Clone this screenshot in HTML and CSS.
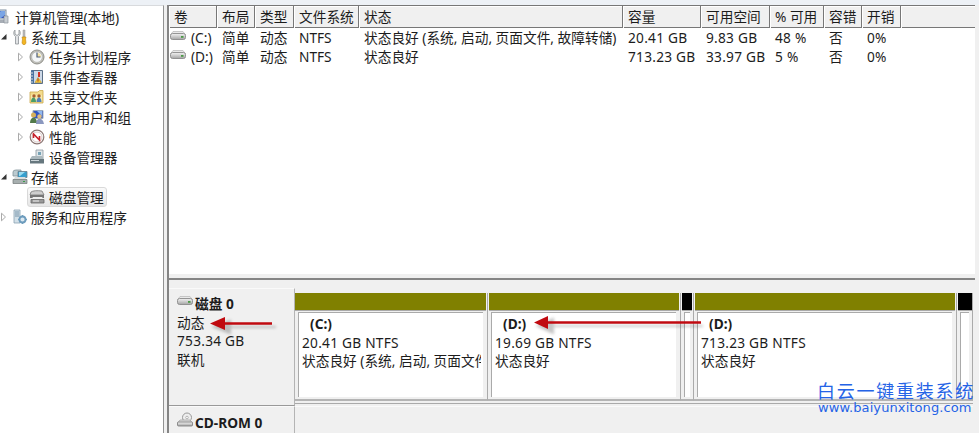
FILE: index.html
```
<!DOCTYPE html>
<html lang="zh-CN">
<head>
<meta charset="UTF-8">
<meta name="viewport" content="width=device-width, initial-scale=1.0">
<title>计算机管理</title>
<link rel="stylesheet" href="styles.css">
</head>
<body>
<!-- 公用图标 -->
<svg class="defs" width="0" height="0">
    <defs>
        <linearGradient id="metal" x1="0" y1="0" x2="0" y2="1">
            <stop offset="0" stop-color="#f4f4f4"/>
            <stop offset="1" stop-color="#a4a4a4"/>
        </linearGradient>
        <symbol id="drive" viewBox="0 0 16 10">
            <path d="M3 .5h10l2.500 3.500H.5z" fill="#e9e9e9" stroke="#bbb" stroke-width=".8"/>
            <rect x=".5" y="2.500" width="15" height="6" rx="2" fill="url(#metal)" stroke="#8a8a8a" stroke-width=".9"/>
            <rect x="11" y="5" width="2.500" height="1.800" fill="#4b9a45"/>
        </symbol>
        <symbol id="closed" viewBox="0 0 8 10">
            <path d="M1.500 1.200L5.500 5l-4 3.800z" fill="#fff" stroke="#aaa"/>
        </symbol>
        <symbol id="open" viewBox="0 0 8 10">
            <path d="M6.500 2v5.500H1z" fill="#333"/>
        </symbol>
    </defs>
</svg>

<div class="window">
    <div class="tree">
        <div class="node root">
            <svg class="icon" viewBox="0 0 16 16"><rect x="1" y="1" width="12" height="9" fill="#dde5ee" stroke="#7d8da0"/><path d="M2 2h10v7H2z" fill="#3352b8"/><path d="M2 7l6-5h4v4L8 9H2z" fill="#7aa5e5"/><path d="M4 11h8l3 3H2z" fill="#a7adb5"/><path d="M11 7h4v7h-4z" fill="#c8cdd2" stroke="#8b939c" stroke-width=".7"/></svg>
            <span>计算机管理(本地)</span>
        </div>
        <div class="node level1">
            <svg class="toggle"><use href="#open"/></svg>
            <svg class="icon" viewBox="0 0 16 16"><path d="M3 1v4l2 1.500L7 5V1c2 2 1.500 5-.5 6.500V15h-3V7.500C1.500 6 1 3 3 1z" fill="#e2e4e6" stroke="#8d9296" stroke-width=".8"/><path d="M11 1h2v7h-2z" fill="#bbb" stroke="#999" stroke-width=".5"/><path d="M10 8h4l-.5 2 .5 4-1 1.500h-2L10 14l.5-4z" fill="#f3b622" stroke="#c08718" stroke-width=".6"/></svg>
            <span>系统工具</span>
        </div>
        <div class="node level2">
            <svg class="toggle"><use href="#closed"/></svg>
            <svg class="icon" viewBox="0 0 16 16"><circle cx="8" cy="8" r="7" fill="#c3c3bd" stroke="#85857f" stroke-width=".9"/><circle cx="8" cy="8" r="5.300" fill="#f5f7f8" stroke="#a9aaa5" stroke-width=".6"/><path d="M8 8h4A4 4 0 0 0 8 4z" fill="#f5e4a5"/><path d="M8 3.500V8h3.500" fill="none" stroke="#4a5c7c" stroke-width="1.200"/></svg>
            <span>任务计划程序</span>
        </div>
        <div class="node level2">
            <svg class="toggle"><use href="#closed"/></svg>
            <svg class="icon" viewBox="0 0 16 16"><path d="M2.500 1.500h11v13h-11z" fill="#cdd9e8" stroke="#5b7088"/><path d="M2 1.500h3v13H2z" fill="#49719f"/><path d="M1 4h3M1 7h3M1 10h3M1 13h3" stroke="#ddd"/><path d="M10 3v5" stroke="#d22f22" stroke-width="2"/><path d="M6 13.500l3-5 3.500 5z" fill="#f2c62e" stroke="#b48c22" stroke-width=".5"/><path d="M9 9.500v3" stroke="#a32"/></svg>
            <span>事件查看器</span>
        </div>
        <div class="node level2">
            <svg class="toggle"><use href="#closed"/></svg>
            <svg class="icon" viewBox="0 0 16 16"><path d="M1 3h8l1.500-1.500H14V14H1z" fill="#f3dc8c" stroke="#c9a64c" stroke-width=".8"/><path d="M2 6h11v7H2z" fill="#f7e8ae"/><circle cx="5" cy="7" r="1.700" fill="#a85e2d"/><circle cx="10" cy="7" r="1.700" fill="#a85e2d"/><path d="M2 13c0-6 5-6 5 0z" fill="#4b9d68"/><path d="M7.500 13c0-6 5-6 5 0z" fill="#5080b8"/></svg>
            <span>共享文件夹</span>
        </div>
        <div class="node level2">
            <svg class="toggle"><use href="#closed"/></svg>
            <svg class="icon" viewBox="0 0 16 16"><path d="M4 1.500h10v8H4z" fill="#3155c0" stroke="#9dabbc"/><path d="M8 2h5v5z" fill="#92b9ef"/><circle cx="4.500" cy="6" r="2.500" fill="#d6b05b"/><path d="M1 14c0-7 7-7 7 0z" fill="#527a4a"/><circle cx="10.500" cy="7.500" r="2.200" fill="#e0bd81"/><path d="M7 15c0-7 7-7 8 0z" fill="#8b98bf"/></svg>
            <span>本地用户和组</span>
        </div>
        <div class="node level2">
            <svg class="toggle"><use href="#closed"/></svg>
            <svg class="icon" viewBox="0 0 16 16"><circle cx="8" cy="8" r="6.800" fill="#fff" stroke="#8b7774" stroke-width="1.200"/><circle cx="8" cy="8" r="5" fill="#fff" stroke="#c9b5b2" stroke-width=".7"/><path d="M4.500 9V5l6 6V7" fill="none" stroke="#c8202a" stroke-width="1.600"/></svg>
            <span>性能</span>
        </div>
        <div class="node level2">
            <span class="toggle"></span>
            <svg class="icon" viewBox="0 0 16 16"><path d="M7 1h7v8H7z" fill="#dfe6e9" stroke="#8d989f" stroke-width=".8"/><path d="M9 3h3v3H9z" fill="#77a2b5"/><path d="M3 7h10l2 3H1z" fill="#abb8bd"/><path d="M1 10h14v4.500H1z" fill="#66777e"/><path d="M2 11h8v1H2z" fill="#ccd5d9"/></svg>
            <span>设备管理器</span>
        </div>
        <div class="node level1">
            <svg class="toggle"><use href="#open"/></svg>
            <svg class="icon" viewBox="0 0 16 16"><path d="M1 3q0-2 3-2h5v6H1z" fill="#bccbd0" stroke="#81939a" stroke-width=".8"/><path d="M6 2.500h9v6H6z" fill="#369fce" stroke="#697f8b" stroke-width=".8"/><path d="M7 3h6L8 7H7z" fill="#9adcf2"/><path d="M3 8h10l2 3H1z" fill="#dadede"/><path d="M1 10.500h14v4H1z" fill="#a7afaf" stroke="#707777" stroke-width=".7"/><path d="M11 12h2v1h-2z" fill="#3b9d4a"/></svg>
            <span>存储</span>
        </div>
        <div class="node level2">
            <span class="toggle"></span>
            <div class="selected">
                <svg class="icon" viewBox="0 0 16 16"><path d="M2 3q3-2 11-1l2 4H1z" fill="#cfcfcf" stroke="#777" stroke-width=".8"/><path d="M1 6h14v3H1z" fill="#777"/><path d="M4 8h9l2 3H2z" fill="#eee"/><path d="M2 10.500h13V14H2z" fill="#999" stroke="#666" stroke-width=".8"/><path d="M4 12h6" stroke="#eee"/></svg>
                <span>磁盘管理</span>
            </div>
        </div>
        <div class="node level1">
            <svg class="toggle"><use href="#closed"/></svg>
            <svg class="icon" viewBox="0 0 16 16"><path d="M2 1h6v13H2z" fill="#d3e0e8" stroke="#8ba2b2" stroke-width=".8"/><path d="M3 3h4M3 5h4M3 7h4" stroke="#7694aa"/><circle cx="10.500" cy="10.500" r="3" fill="#dce9f1" stroke="#6d9cbd" stroke-width="1.800"/><path d="M10.500 6v2M10.500 13v2M6 10.500h2M13 10.500h2" stroke="#6d9cbd" stroke-width="1.500"/></svg>
            <span>服务和应用程序</span>
        </div>
    </div>

    <div class="content">
        <div class="volumes">
            <div class="row head">
                <span>卷</span><span>布局</span><span>类型</span><span>文件系统</span><span>状态</span><span>容量</span><span>可用空间</span><span>% 可用</span><span>容错</span><span>开销</span><span></span>
            </div>
            <div class="row">
                <span class="vol"><svg class="drive"><use href="#drive"/></svg>(C:)</span><span>简单</span><span>动态</span><span>NTFS</span><span>状态良好 (系统, 启动, 页面文件, 故障转储)</span><span class="num">20.41 GB</span><span class="num">9.83 GB</span><span class="num">48 %</span><span>否</span><span class="num">0%</span>
            </div>
            <div class="row">
                <span class="vol"><svg class="drive"><use href="#drive"/></svg>(D:)</span><span>简单</span><span>动态</span><span>NTFS</span><span>状态良好</span><span class="num">713.23 GB</span><span class="num">33.97 GB</span><span class="num">5 %</span><span>否</span><span class="num">0%</span>
            </div>
        </div>

        <div class="disks">
            <div class="disk">
                <div class="info">
                    <div class="title"><svg class="drive"><use href="#drive"/></svg>磁盘 0</div>
                    <div>动态</div>
                    <div class="num">753.34 GB</div>
                    <div>联机</div>
                </div>
                <div class="parts">
                    <div class="part">
                        <div class="bar"></div>
                        <div class="box">
                            <div class="name">(C:)</div>
                            <div class="num">20.41 GB NTFS</div>
                            <div class="state">状态良好 (系统, 启动, 页面文件</div>
                        </div>
                    </div>
                    <div class="part">
                        <div class="bar"></div>
                        <div class="box">
                            <div class="name">(D:)</div>
                            <div class="num">19.69 GB NTFS</div>
                            <div>状态良好</div>
                        </div>
                    </div>
                    <div class="part free">
                        <div class="bar"></div>
                        <div class="box"></div>
                    </div>
                    <div class="part">
                        <div class="bar"></div>
                        <div class="box">
                            <div class="name">(D:)</div>
                            <div class="num">713.23 GB NTFS</div>
                            <div>状态良好</div>
                        </div>
                    </div>
                    <div class="part free">
                        <div class="bar"></div>
                        <div class="box"></div>
                    </div>
                </div>
            </div>
            <div class="disk cdrom">
                <div class="info">
                    <div class="title"><svg class="cd" viewBox="0 0 16 16"><circle cx="10" cy="5.500" r="4.500" fill="#eee" stroke="#999"/><circle cx="10" cy="5.500" r="1.300" fill="#fff" stroke="#999" stroke-width=".7"/><path d="M3 8h10l2.500 3H.5z" fill="#ddd" stroke="#999" stroke-width=".7"/><rect x=".5" y="10" width="15" height="4" rx="1" fill="url(#metal)" stroke="#777" stroke-width=".8"/></svg>CD-ROM 0</div>
                </div>
                <div class="parts"></div>
            </div>
        </div>
    </div>
</div>

<!-- 标注箭头 -->
<svg class="arrows" width="979" height="433">
    <g class="shadow">
        <path d="M226 327h50"/>
        <path d="M214 327l16-6v12z"/>
        <path d="M550 326h153"/>
        <path d="M538 326l15-7v14z"/>
    </g>
    <g class="arrow">
        <path d="M224 323.500h48"/>
        <path d="M210 323.500l15-6.500v13z"/>
        <path d="M546 322.500h155"/>
        <path d="M534 322.500l14-6.500v13z"/>
    </g>
</svg>

<div class="watermark">
    <div class="brand">白云一键重装系统</div>
    <div class="site">www.baiyunxitong.com</div>
</div>
</body>
</html>
```
FILE: styles.css
```
* {
    box-sizing: border-box;
}

body {
    margin: 0;
    height: 433px;
    overflow: hidden;
    background-color: #f0f0f0;
    color: #1c1c1c;
    font-family: "Noto Sans", "Noto Sans CJK SC", sans-serif;
    font-size: 13.7px;
    line-height: 19px;
    white-space: nowrap;
}

.defs {
    display: block;
}

.window {
    display: flex;
    height: 433px;
    padding-top: 5px;
    overflow: hidden;
    background: linear-gradient(#edf1f6 5px, #f0f0f0 5px);
}

/* 左侧树 */
.tree {
    width: 164px;
    padding-top: 1px;
    background-color: #fff;
    border-top: 1px solid #d8dadd;
    border-right: 1px solid #929292;
    overflow: hidden;
}

.node {
    display: flex;
    align-items: center;
    height: 20px;
}

.root {
    margin-left: -7px;
}

.level2 {
    padding-left: 17px;
}

.toggle {
    width: 8px;
    height: 10px;
    margin-right: 4px;
    flex: none;
}

.icon {
    width: 16px;
    height: 16px;
    margin-right: 3px;
    flex: none;
}

.root .icon {
    margin-right: 6px;
}

.level2 .icon {
    margin-right: 4px;
}

.selected {
    display: flex;
    align-items: center;
    height: 20px;
    margin-left: -2px;
    padding: 0 2px 0 1px;
    border: 1px solid #d9d9d9;
    border-radius: 3px;
    background: linear-gradient(#fafafa, #e6e6e6);
}

/* 右侧 */
.content {
    width: 808px;
    margin-left: 3px;
    border-left: 2px solid #858585;
}

.volumes {
    height: 275px;
    border-top: 1px solid #777;
    border-bottom: 2px solid #858585;
    background: linear-gradient(#fff 268px, #f0f0f0 268px);
}

.row {
    display: grid;
    grid-template-columns: 48px 38px 39px 65px 264px 78px 69px 54px 38px 39px 1fr;
    height: 19px;
}

.row span {
    padding-left: 5px;
    line-height: 19px;
}

.num {
    letter-spacing: 0.25px;
}

.head {
    height: 22px;
    background-color: #f0f0f0;
    border-bottom: 1px solid #777;
}

.head span {
    line-height: 22px;
    border-right: 1px solid #777;
    box-shadow: inset 1px 1px #fff;
}

.head span:last-child {
    border-right: none;
}

.row .vol {
    display: flex;
    padding-left: 1px;
}

.drive {
    width: 16px;
    height: 10px;
    margin: 3px 5px 0 0;
    flex: none;
}

/* 磁盘视图 */
.disks {
    padding-top: 8px;
}

.disk {
    display: flex;
    height: 118px;
}

.info {
    width: 126px;
    padding: 6px 8px 0;
    border-top: 1px solid #fafafa;
    border-right: 1px solid #b4b4b4;
    border-bottom: 1px solid #999;
    line-height: 18.5px;
}

.title {
    display: flex;
    font-weight: bold;
    font-size: 13.7px;
}

.info .title .drive {
    margin: 1px 2px 0 0;
}

.parts {
    display: grid;
    grid-template-columns: 193px 193px 13px 263px 16px;
    width: 678px;
    height: 116px;
    padding-top: 5px;
    border-bottom: 1px solid #aaa;
}

.part {
    height: 108px;
    min-width: 0;
    border-right: 1px solid #aaa;
    border-bottom: 2px solid #b4b4b4;
}

.bar {
    height: 17px;
    margin-right: 1px;
    background-color: #808000;
    box-shadow: 0 1px #aaa;
}

.part + .part .bar {
    margin-left: 1px;
}

.free .bar {
    background-color: #000;
}

.part:last-child .bar {
    margin-right: 0;
}

.box {
    height: 85px;
    margin: 2px 4px 0 3px;
    padding: 2px 2px 0 3px;
    border-top: 1px solid #aaa;
    border-left: 1px solid #aaa;
    background-color: #fff;
    line-height: 18.7px;
}

.name {
    padding-left: 8px;
    font-weight: bold;
    font-size: 13.7px;
}

.state {
    overflow: hidden;
}

.free .box {
    margin-right: 3px;
    padding: 0;
}

.cdrom {
    height: 27px;
}

.cdrom .info {
    padding-top: 7px;
    border-bottom: none;
}

.cdrom .parts {
    height: 27px;
    border-top: 1px solid #fafafa;
    border-bottom: none;
}

.cd {
    width: 16px;
    height: 16px;
    margin: -2px 2px 0 0;
}

.arrows {
    position: absolute;
    left: 0;
    top: 0;
}

.arrow path {
    fill: #c00a10;
    stroke: #c00a10;
    stroke-width: 2.5px;
}

.arrow path:nth-child(even) {
    stroke: none;
}

.shadow {
    opacity: 0.3;
    filter: blur(1.5px);
}

.shadow path {
    fill: #444;
    stroke: #444;
    stroke-width: 2px;
}

.watermark {
    position: absolute;
    left: 817px;
    top: 380px;
    color: #2563e6;
}

.brand {
    font-family: "Noto Sans CJK SC", sans-serif;
    font-size: 18px;
    letter-spacing: 1.75px;
    line-height: 20px;
}

.site {
    padding-left: 1px;
    font-family: "DejaVu Sans", sans-serif;
    font-size: 13px;
    letter-spacing: 0.1px;
    line-height: 15px;
}
```
